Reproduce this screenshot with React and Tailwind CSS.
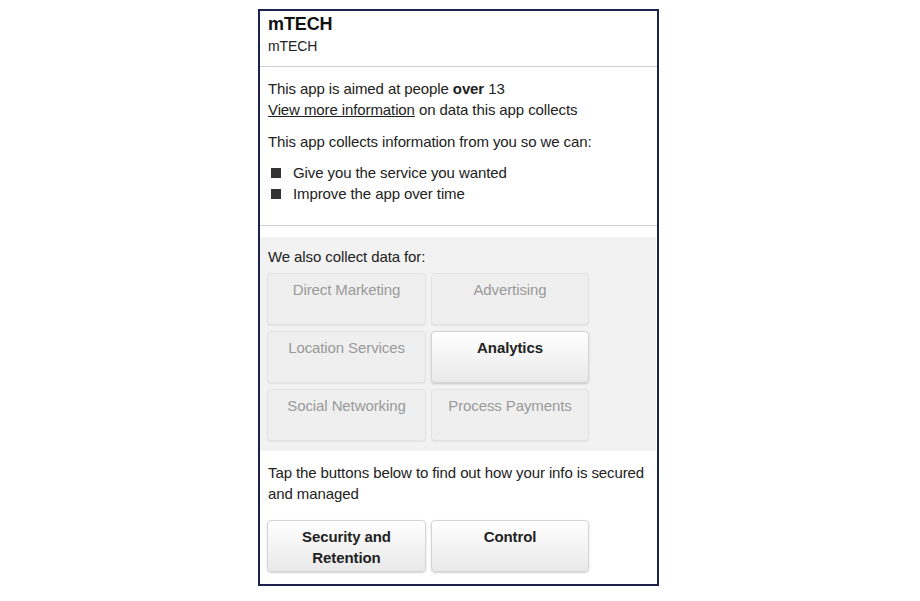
const categories = [
  { label: "Direct Marketing", on: false },
  { label: "Advertising", on: false },
  { label: "Location Services", on: false },
  { label: "Analytics", on: true },
  { label: "Social Networking", on: false },
  { label: "Process Payments", on: false },
];

function Chip({ label, on }) {
  if (on) {
    return (
      <div className="h-[52px] rounded-[4px] border border-[#d4d4d4] bg-gradient-to-b from-white to-[#e9e9e9] shadow-[0_1px_2px_rgba(0,0,0,0.18)] pt-[5px] text-center text-[15px] leading-[21px] font-bold text-[#222]">
        {label}
      </div>
    );
  }
  return (
    <div className="h-[52px] rounded-[4px] border border-[#e2e2e2] bg-[#efefef] shadow-[0_1px_1px_rgba(0,0,0,0.06)] pt-[5px] text-center text-[15px] leading-[21px] text-[#9a9a9a]">
      {label}
    </div>
  );
}

export default function App() {
  return (
    <div className="min-h-screen bg-white font-['Liberation_Sans',Arial,sans-serif] text-[#222] tracking-[-0.1px]">
      <div className="ml-[258px] pt-[9px]">
        <div className="w-[401px] h-[577px] border-2 border-[#1d2150] flex flex-col">
          <div className="px-[8px] pt-[2px] pb-[10px] border-b border-[#cfcfcf]">
            <h1 className="text-[18px] leading-[22px] font-bold text-[#111]">mTECH</h1>
            <p className="text-[14px] leading-[20px] mt-[1px]">mTECH</p>
          </div>

          <div className="px-[8px] pt-[11px] pb-[21px] border-b border-[#cfcfcf] text-[15px] leading-[21px]">
            <p>
              This app is aimed at people <b>over</b> 13
            </p>
            <p>
              <span className="underline">View more information</span> on data this app collects
            </p>
            <p className="mt-[11px]">This app collects information from you so we can:</p>
            <ul className="mt-[10px]">
              <li className="flex items-center">
                <span className="ml-[3px] w-[10px] h-[10px] bg-[#333]" />
                <span className="ml-[12px]">Give you the service you wanted</span>
              </li>
              <li className="flex items-center">
                <span className="ml-[3px] w-[10px] h-[10px] bg-[#333]" />
                <span className="ml-[12px]">Improve the app over time</span>
              </li>
            </ul>
          </div>

          <div className="mt-[11px] bg-[#f2f2f2] pl-[7px] pr-[8px] pt-[9px] pb-[10px] mr-[1px]">
            <p className="pl-[1px] text-[15px] leading-[21px]">We also collect data for:</p>
            <div className="mt-[6px] grid grid-cols-[159px_158px] gap-x-[5px] gap-y-[6px]">
              {categories.map((c) => (
                <Chip key={c.label} label={c.label} on={c.on} />
              ))}
            </div>
          </div>

          <div className="pl-[8px] pr-[2px] pt-[11px] text-[15px] leading-[21px]">
            <p>Tap the buttons below to find out how your info is secured and managed</p>
          </div>
          <div className="pl-[7px] mt-[16px] grid grid-cols-[159px_158px] gap-x-[5px]">
            <Chip label="Security and Retention" on />
            <Chip label="Control" on />
          </div>
        </div>
      </div>
    </div>
  );
}
